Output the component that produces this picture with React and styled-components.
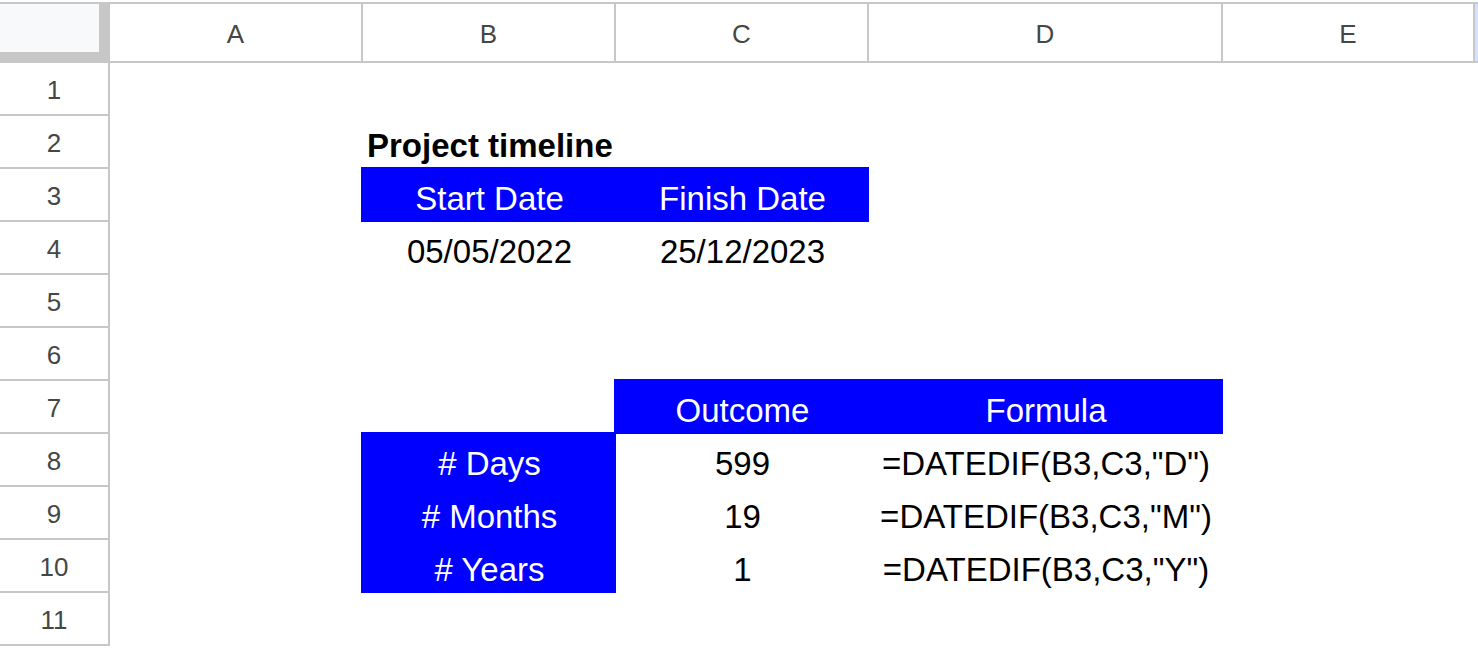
import styled, { createGlobalStyle } from "styled-components";

const GlobalStyle = createGlobalStyle`
  html, body {
    margin: 0;
    padding: 0;
    background: #ffffff;
    overflow: hidden;
  }
`;

const Sheet = styled.div`
  display: grid;
  grid-template-columns: 110px 253px 253px 253px 354px 252px 1fr;
  grid-template-rows: 63px repeat(11, 53px);
  width: 1478px;
  height: 650px;
  background: #ffffff;
  font-family: "Liberation Sans", Arial, sans-serif;
`;

const Corner = styled.div`
  margin-top: 2px;
  background: #f8f9fa;
  border-top: 2px solid #c7c7c7;
  border-right: 11px solid #c7c7c7;
  border-bottom: 11px solid #c7c7c7;
`;

const ColHeader = styled.div`
  margin-top: 2px;
  display: flex;
  align-items: center;
  justify-content: center;
  padding-top: 4px;
  border-top: 2px solid #c7c7c7;
  border-right: 2px solid #c7c7c7;
  border-bottom: 2px solid #c7c7c7;
  color: #444746;
  font-size: 26px;
`;

const HeaderTail = styled.div`
  margin-top: 2px;
  border-top: 2px solid #c7c7c7;
  border-bottom: 2px solid #c7c7c7;
  background: #d3e3fd;
`;

const RowHeader = styled.div`
  display: flex;
  align-items: center;
  justify-content: center;
  padding-top: 3px;
  border-right: 2px solid #c7c7c7;
  border-bottom: 2px solid #c7c7c7;
  color: #444746;
  font-size: 26px;
`;

const Cell = styled.div`
  display: flex;
  align-items: flex-end;
  justify-content: ${({ $left }) => ($left ? "flex-start" : "center")};
  padding: 0 4px 4px;
  font-size: 33px;
  line-height: 38px;
  white-space: nowrap;
  font-weight: ${({ $bold }) => ($bold ? 700 : 400)};
  color: ${({ $fill }) => ($fill ? "#ffffff" : "#000000")};
  background: ${({ $fill }) => ($fill ? "#0000ff" : "transparent")};
  margin: ${({ $fill }) => ($fill ? "-2px 0 0 -2px" : "0")};
  padding-left: ${({ $fill }) => ($fill ? "6px" : "4px")};
`;

const columns = ["A", "B", "C", "D", "E"];

const rows = [
  [],
  [null, { text: "Project timeline", bold: true, left: true }],
  [null, { text: "Start Date", fill: true }, { text: "Finish Date", fill: true }],
  [null, { text: "05/05/2022" }, { text: "25/12/2023" }],
  [],
  [],
  [null, null, { text: "Outcome", fill: true }, { text: "Formula", fill: true }],
  [null, { text: "# Days", fill: true }, { text: "599" }, { text: '=DATEDIF(B3,C3,"D")' }],
  [null, { text: "# Months", fill: true }, { text: "19" }, { text: '=DATEDIF(B3,C3,"M")' }],
  [null, { text: "# Years", fill: true }, { text: "1" }, { text: '=DATEDIF(B3,C3,"Y")' }],
  [],
];

export default function App() {
  return (
    <>
      <GlobalStyle />
      <Sheet>
        <Corner />
        {columns.map((c) => (
          <ColHeader key={c}>{c}</ColHeader>
        ))}
        <HeaderTail />
        {rows.map((row, r) => (
          <Row key={r} index={r + 1} cells={row} />
        ))}
      </Sheet>
    </>
  );
}

function Row({ index, cells }) {
  return (
    <>
      <RowHeader>{index}</RowHeader>
      {columns.map((c, i) => {
        const cell = cells[i];
        if (!cell) return <Cell key={c} />;
        return (
          <Cell key={c} $fill={cell.fill} $bold={cell.bold} $left={cell.left}>
            {cell.text}
          </Cell>
        );
      })}
      <div />
    </>
  );
}
